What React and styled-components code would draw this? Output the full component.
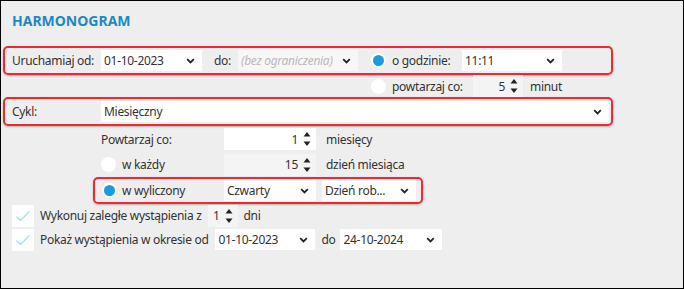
import React from 'react';
import styled, { createGlobalStyle } from 'styled-components';

const GlobalStyle = createGlobalStyle`
  body {
    margin: 0;
    font-family: "Noto Sans", "Open Sans", sans-serif;
    font-size: 12px;
    letter-spacing: -0.3px;
    color: #333;
  }
`;

const Frame = styled.div`
  width: 684px;
  height: 289px;
  box-sizing: border-box;
  border: 1px solid #000;
  background: #eeeeee;
  overflow: hidden;
`;

const Title = styled.h2`
  margin: 0;
  padding: 10px 0 0 11px;
  height: 35px;
  font-size: 14px;
  font-weight: 700;
  color: #1b89c6;
  letter-spacing: 0;
`;

const Highlight = styled.div`
  display: flex;
  align-items: center;
  box-sizing: border-box;
  margin-left: ${(p) => p.$left}px;
  width: ${(p) => p.$width}px;
  height: ${(p) => p.$height}px;
  padding-left: 7px;
  border: 2px solid #ec2a2f;
  border-radius: 5px;
  box-shadow: 0 1px 2px rgba(0, 0, 0, 0.25);
`;

const Row = styled.div`
  display: flex;
  align-items: center;
  height: ${(p) => p.$height}px;
  padding-left: ${(p) => p.$indent}px;
`;

const Label = styled.span`
  display: inline-block;
  width: ${(p) => (p.$width ? `${p.$width}px` : 'auto')};
  margin-left: ${(p) => p.$gap || 0}px;
  margin-right: ${(p) => p.$after || 0}px;
  white-space: nowrap;
  flex-shrink: 0;
`;

const SelectBox = styled.div`
  position: relative;
  display: flex;
  align-items: center;
  box-sizing: border-box;
  width: ${(p) => (p.$width ? `${p.$width}px` : 'auto')};
  flex: ${(p) => (p.$width ? '0 0 auto' : '1')};
  height: 21px;
  margin-left: ${(p) => p.$gap || 0}px;
  margin-right: ${(p) => p.$after || 0}px;
  padding: 0 20px 0 3px;
  background: ${(p) => (p.$disabled ? '#f7f7f7' : '#fff')};
  color: ${(p) => (p.$placeholder ? '#b9b9b9' : '#333')};
  font-style: ${(p) => (p.$placeholder ? 'italic' : 'normal')};
  white-space: nowrap;
  overflow: hidden;
`;

const Chevron = styled.svg`
  position: absolute;
  right: 7px;
  top: 8px;
`;

const Spinner = styled.div`
  position: relative;
  display: flex;
  align-items: center;
  justify-content: flex-end;
  box-sizing: border-box;
  width: ${(p) => p.$width}px;
  height: 22px;
  margin-right: ${(p) => p.$after || 0}px;
  padding-right: 18px;
  background: ${(p) => (p.$muted ? '#f4f4f4' : '#fff')};
`;

const Arrows = styled.svg`
  position: absolute;
  right: 5px;
  top: 3px;
`;

const Radio = styled.span`
  display: inline-flex;
  align-items: center;
  justify-content: center;
  box-sizing: border-box;
  width: 15px;
  height: 15px;
  border-radius: 50%;
  background: #fff;
  flex-shrink: 0;

  &::after {
    content: '';
    display: ${(p) => (p.$checked ? 'block' : 'none')};
    width: 11px;
    height: 11px;
    border-radius: 50%;
    background: #1a9be0;
  }
`;

const Check = styled.span`
  display: inline-flex;
  align-items: center;
  justify-content: center;
  width: 22px;
  height: 22px;
  background: #fff;
  flex-shrink: 0;
  margin-right: 6px;
`;

const Select = ({ children, ...rest }) => (
  <SelectBox {...rest}>
    {children}
    <Chevron width="9" height="6" viewBox="0 0 9 6">
      <path d="M1.2 1.2l3.3 3.3 3.3-3.3" fill="none" stroke="#222" strokeWidth="1.8" />
    </Chevron>
  </SelectBox>
);

const Spin = ({ children, ...rest }) => (
  <Spinner {...rest}>
    {children}
    <Arrows width="8" height="16" viewBox="0 0 8 16">
      <path d="M4 1L7.5 5.5H0.5Z" fill="#222" />
      <path d="M4 15L7.5 10.5H0.5Z" fill="#222" />
    </Arrows>
  </Spinner>
);

const CheckBox = () => (
  <Check>
    <svg width="16" height="12" viewBox="0 0 16 12">
      <path d="M1.5 6.5l4 4L14.5 1.5" fill="none" stroke="#a9dcf2" strokeWidth="1.4" />
    </svg>
  </Check>
);

const App = () => (
  <>
    <GlobalStyle />
    <Frame>
      <Title>HARMONOGRAM</Title>

      <Highlight $left={2} $width={610} $height={29}>
        <Label $width={89}>Uruchamiaj od:</Label>
        <Select $width={101}>01-10-2023</Select>
        <Label $gap={12} $width={24}>do:</Label>
        <Select $width={120} $disabled $placeholder>(bez ograniczenia)</Select>
        <Radio $checked style={{ marginLeft: 13 }} />
        <Label $gap={6} $width={70}>o godzinie:</Label>
        <Select $width={100}>11:11</Select>
      </Highlight>

      <Row $height={22} $indent={370}>
        <Radio />
        <Label $gap={6} $width={81}>powtarzaj co:</Label>
        <Spin $width={50} $muted $after={7}>5</Spin>
        <Label>minut</Label>
      </Row>

      <Highlight $left={2} $width={610} $height={29}>
        <Label $width={89}>Cykl:</Label>
        <Select $after={2}>Miesięczny</Select>
      </Highlight>

      <Row $height={26} $indent={100}>
        <Label $width={123}>Powtarzaj co:</Label>
        <Spin $width={92} $after={10}>1</Spin>
        <Label>miesięcy</Label>
      </Row>

      <Row $height={25} $indent={100}>
        <Radio />
        <Label $gap={6} $width={102}>w każdy</Label>
        <Spin $width={92} $muted $after={10}>15</Spin>
        <Label>dzień miesiąca</Label>
      </Row>

      <Highlight $left={92} $width={330} $height={27}>
        <Radio $checked />
        <Label $gap={5} $width={102}>w wyliczony</Label>
        <Select $width={92}>Czwarty</Select>
        <Select $width={94} $gap={6}>Dzień rob...</Select>
      </Highlight>

      <Row $height={23} $indent={11}>
        <CheckBox />
        <Label $after={6}>Wykonuj zaległe wystąpienia z</Label>
        <Spin $width={30} $muted $after={6}>1</Spin>
        <Label>dni</Label>
      </Row>

      <Row $height={25} $indent={11}>
        <CheckBox />
        <Label $after={7}>Pokaż wystąpienia w okresie od</Label>
        <Select $width={100}>01-10-2023</Select>
        <Label $gap={6} $width={19}>do</Label>
        <Select $width={102}>24-10-2024</Select>
      </Row>
    </Frame>
  </>
);

export default App;
